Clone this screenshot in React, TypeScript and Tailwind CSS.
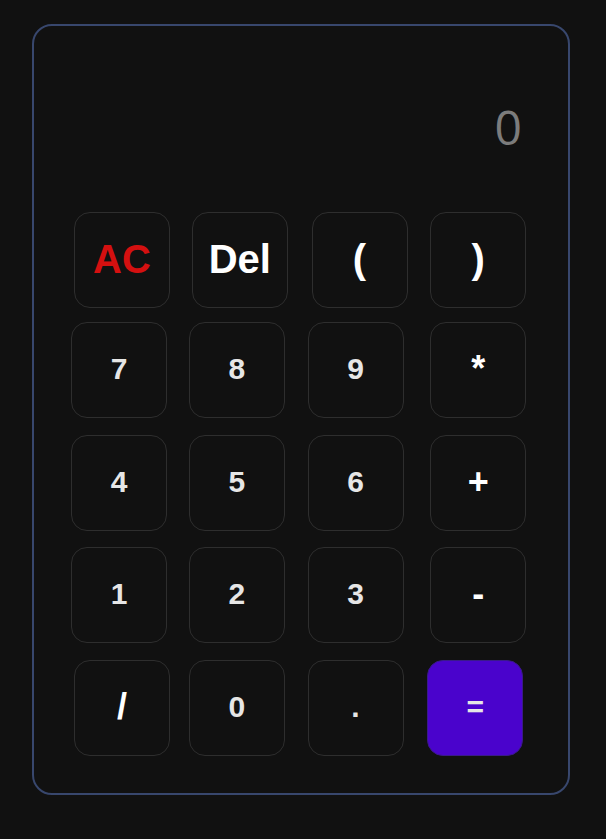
import React from "react";

type Key = { label: string; cls: string; off?: string; accent?: boolean };

const digit = "text-[30px] text-[#e6e6e6]";
const op = "text-[36px] text-white";
const big = "text-[40px] text-white";

const rows: { mt: string; keys: Key[] }[] = [
  {
    mt: "mt-0",
    keys: [
      { label: "AC", cls: "text-[40px] text-[#d41010]", off: "ml-[3px]" },
      { label: "Del", cls: big, off: "ml-[2px]" },
      { label: "(", cls: big, off: "ml-[3px]" },
      { label: ")", cls: big, off: "ml-[3px]" },
    ],
  },
  {
    mt: "mt-[14px]",
    keys: [
      { label: "7", cls: digit },
      { label: "8", cls: digit, off: "-ml-[1px]" },
      { label: "9", cls: digit, off: "-ml-[1px]" },
      { label: "*", cls: op, off: "ml-[3px]" },
    ],
  },
  {
    mt: "mt-[17px]",
    keys: [
      { label: "4", cls: digit },
      { label: "5", cls: digit, off: "-ml-[1px]" },
      { label: "6", cls: digit, off: "-ml-[1px]" },
      { label: "+", cls: op, off: "ml-[3px]" },
    ],
  },
  {
    mt: "mt-[16px]",
    keys: [
      { label: "1", cls: digit },
      { label: "2", cls: digit, off: "-ml-[1px]" },
      { label: "3", cls: digit, off: "-ml-[1px]" },
      { label: "-", cls: op, off: "ml-[3px]" },
    ],
  },
  {
    mt: "mt-[17px]",
    keys: [
      { label: "/", cls: op, off: "ml-[3px]" },
      { label: "0", cls: digit, off: "-ml-[1px]" },
      { label: ".", cls: digit, off: "-ml-[1px]" },
      { label: "=", cls: digit, accent: true },
    ],
  },
];

export default function App() {
  return (
    <div className="min-h-[839px] w-full bg-[#111111] pt-[24px] pl-[32px] font-['Liberation_Sans',Arial,sans-serif]">
      <div className="w-[538px] rounded-[20px] border-2 border-[#38476d] pb-[37px]">
        <div className="h-[186px] pt-[77px] pr-[46px] text-right font-['Open_Sans',sans-serif] text-5xl leading-none text-[#7c7c7c]">
          0
        </div>
        <div className="pl-[37px]">
          {rows.map((row, i) => (
            <div key={i} className={`grid w-[475px] grid-cols-4 ${row.mt}`}>
              {row.keys.map((k) => (
                <button
                  key={k.label}
                  className={`flex h-[96px] w-[96px] items-center justify-center rounded-[16px] border pb-[2px] font-bold leading-none ${
                    k.accent ? "border-[#3a1a8a] bg-[#4a03cc]" : "border-[#2e2e2e] bg-[#111111]"
                  } ${k.cls} ${k.off ?? ""}`}
                >
                  {k.label}
                </button>
              ))}
            </div>
          ))}
        </div>
      </div>
    </div>
  );
}
